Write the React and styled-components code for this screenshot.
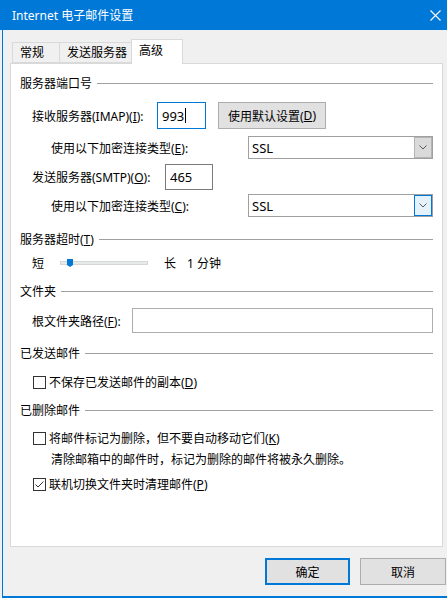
import React from 'react'
import styled, { createGlobalStyle } from 'styled-components'

const GlobalStyle = createGlobalStyle`
  html, body {
    margin: 0;
    padding: 0;
    background: #f0f0f0;
  }
  body {
    font-family: "Noto Sans", "Noto Sans CJK SC", sans-serif;
    font-size: 12px;
    color: #000;
  }
`

const Window = styled.div`
  width: 445px;
  height: 598px;
  box-sizing: border-box;
  display: flex;
  flex-direction: column;
  background: #f0f0f0;
  border-left: 1px solid #0078d7;
  border-bottom: 2px solid #0078d7;
  margin-left: 2px;
`

const TitleBar = styled.div`
  height: 30px;
  flex: none;
  display: flex;
  align-items: center;
  justify-content: space-between;
  background: #0078d7;
  color: #fff;
  padding: 0 6px 0 12px;
  margin-left: -3px;
  font-size: 12px;
`

const CloseIcon = () => (
  <svg width="11" height="11" viewBox="0 0 11 11">
    <path d="M0.5 0.5 L10.5 10.5 M10.5 0.5 L0.5 10.5" stroke="#fff" strokeWidth="1.1" fill="none" />
  </svg>
)

const TabStrip = styled.div`
  display: flex;
  align-items: flex-end;
  height: 24px;
  margin-top: 9px;
  padding-left: 9px;
  position: relative;
  z-index: 1;
`

const Tab = styled.div`
  box-sizing: border-box;
  min-width: ${p => (p.$active ? '52px' : '48px')};
  height: ${p => (p.$active ? '25px' : '21px')};
  padding: 0 4px 0 7px;
  display: flex;
  align-items: ${p => (p.$active ? 'flex-start' : 'center')};
  padding-top: ${p => (p.$active ? '2px' : '0')};
  background: ${p => (p.$active ? '#fff' : '#f0f0f0')};
  border: 1px solid #d9d9d9;
  border-bottom: ${p => (p.$active ? 'none' : '1px solid #d9d9d9')};
  margin-left: ${p => (p.$first ? '0' : '-1px')};
  margin-bottom: ${p => (p.$active ? '-1px' : '0')};
  line-height: 18px;
`

const Panel = styled.div`
  box-sizing: border-box;
  margin: 0 0 0 7px;
  width: 433px;
  height: 484px;
  background: #fff;
  border: 1px solid #d9d9d9;
  padding: 0 9px;
  display: flex;
  flex-direction: column;
`

const Row = styled.div`
  display: flex;
  align-items: center;
  height: ${p => p.$h || 20}px;
  margin-top: ${p => p.$top || 0}px;
  padding-left: ${p => p.$indent || 0}px;
  flex: none;
  white-space: nowrap;
`

const SectionTitle = styled.span`
  flex: none;
  margin-right: 5px;
`

const Rule = styled.div`
  flex: 1;
  height: 1px;
  background: #a0a0a0;
`

const Label = styled.span`
  flex: none;
  width: ${p => (p.$w ? `${p.$w}px` : 'auto')};
`

const TextBox = styled.div`
  box-sizing: border-box;
  width: ${p => (p.$w ? `${p.$w}px` : 'auto')};
  flex: ${p => (p.$w ? 'none' : '1')};
  height: ${p => p.$h}px;
  border: 1px solid ${p => (p.$focus ? '#0078d7' : p.$soft ? '#adadad' : '#7a7a7a')};
  background: #fff;
  display: flex;
  align-items: center;
  padding-left: 4px;
  font-size: 13px;
`

const Caret = styled.span`
  display: inline-block;
  width: 1px;
  height: 15px;
  background: #000;
  margin-left: 1px;
`

const Button = styled.div`
  box-sizing: border-box;
  width: ${p => p.$w}px;
  height: 27px;
  flex: none;
  margin-left: ${p => p.$gap || 0}px;
  display: flex;
  align-items: center;
  justify-content: center;
  background: #e1e1e1;
  border: ${p => (p.$primary ? '2px solid #0078d7' : '1px solid #adadad')};
`

const Select = styled.div`
  box-sizing: border-box;
  flex: 1;
  height: 23px;
  border: 1px solid #a0a0a0;
  display: flex;
  align-items: center;
  justify-content: space-between;
  padding: 0 0 0 3px;
  font-size: 13px;
  background: #fff;
`

const DropButton = styled.div`
  box-sizing: border-box;
  width: 18px;
  height: 21px;
  display: flex;
  align-items: center;
  justify-content: center;
  border: 1px solid ${p => (p.$focus ? '#0078d7' : '#b4b4b4')};
  background: ${p => (p.$focus ? '#e5f1fb' : '#dadada')};
`

const Chevron = () => (
  <svg width="8" height="5" viewBox="0 0 8 5">
    <path d="M0.5 0.5 L4 4 L7.5 0.5" stroke="#5a5a5a" strokeWidth="1" fill="none" />
  </svg>
)

const Track = styled.div`
  position: relative;
  box-sizing: border-box;
  width: 88px;
  height: 4px;
  margin: 0 16px;
  background: #e7eaea;
  border: 1px solid #d6d6d6;
`

const Thumb = styled.div`
  position: absolute;
  left: 6px;
  top: -3px;
  width: 6px;
  height: 8px;
  background: #0078d7;
  clip-path: polygon(0 0, 100% 0, 100% 75%, 50% 100%, 0 75%);
`

const Box = styled.div`
  box-sizing: border-box;
  width: 13px;
  height: 13px;
  border: 1px solid #333;
  background: #fff;
  margin: 0 3px 0 1px;
  flex: none;
  display: flex;
  align-items: center;
  justify-content: center;
`

const Check = () => (
  <svg width="11" height="11" viewBox="0 0 11 11">
    <path d="M1.5 5.5 L4 8 L9.5 2.5" stroke="#333" strokeWidth="1" fill="none" />
  </svg>
)

const Footer = styled.div`
  display: flex;
  justify-content: flex-end;
  gap: 10px;
  margin-top: 11px;
  padding-right: 1px;
`

const Section = ({ title, top }) => (
  <Row $top={top}>
    <SectionTitle>{title}</SectionTitle>
    <Rule />
  </Row>
)

const Checkbox = ({ checked, top, children }) => (
  <Row $top={top} $indent={12}>
    <Box>{checked && <Check />}</Box>
    <span>{children}</span>
  </Row>
)

const App = () => (
  <>
    <GlobalStyle />
    <Window>
      <TitleBar>
        <span>Internet 电子邮件设置</span>
        <CloseIcon />
      </TitleBar>

      <TabStrip>
        <Tab $first>常规</Tab>
        <Tab>发送服务器</Tab>
        <Tab $active>高级</Tab>
      </TabStrip>

      <Panel>
        <Section title="服务器端口号" top={9} />
        <Row $top={9} $h={27} $indent={12}>
          <Label $w={125}>接收服务器(IMAP)(<u>I</u>):</Label>
          <TextBox $w={49} $h={27} $focus>993<Caret /></TextBox>
          <Button $w={108} $gap={12}>使用默认设置(<u>D</u>)</Button>
        </Row>
        <Row $top={7} $h={23} $indent={31}>
          <Label $w={197}>使用以下加密连接类型(<u>E</u>):</Label>
          <Select>SSL<DropButton><Chevron /></DropButton></Select>
        </Row>
        <Row $top={5} $h={26} $indent={12}>
          <Label $w={133}>发送服务器(SMTP)(<u>O</u>):</Label>
          <TextBox $w={48} $h={26}>465</TextBox>
        </Row>
        <Row $top={4} $h={23} $indent={31}>
          <Label $w={197}>使用以下加密连接类型(<u>C</u>):</Label>
          <Select>SSL<DropButton $focus><Chevron /></DropButton></Select>
        </Row>

        <Section title={<>服务器超时(<u>T</u>)</>} top={12} />
        <Row $top={4} $indent={12}>
          <Label>短</Label>
          <Track><Thumb /></Track>
          <Label>长</Label>
          <Label style={{ marginLeft: 11 }}>1 分钟</Label>
        </Row>

        <Section title="文件夹" top={8} />
        <Row $top={7} $h={25} $indent={12}>
          <Label $w={100}>根文件夹路径(<u>F</u>):</Label>
          <TextBox $h={25} $soft />
        </Row>

        <Section title="已发送邮件" top={10} />
        <Checkbox top={9}>不保存已发送邮件的副本(<u>D</u>)</Checkbox>

        <Section title="已删除邮件" top={8} />
        <Checkbox top={8}>将邮件标记为删除，但不要自动移动它们(<u>K</u>)</Checkbox>
        <Row $top={1} $indent={31}>清除邮箱中的邮件时，标记为删除的邮件将被永久删除。</Row>
        <Checkbox top={5} checked>联机切换文件夹时清理邮件(<u>P</u>)</Checkbox>
      </Panel>

      <Footer>
        <Button $w={85} $primary>确定</Button>
        <Button $w={86}>取消</Button>
      </Footer>
    </Window>
  </>
)

export default App
